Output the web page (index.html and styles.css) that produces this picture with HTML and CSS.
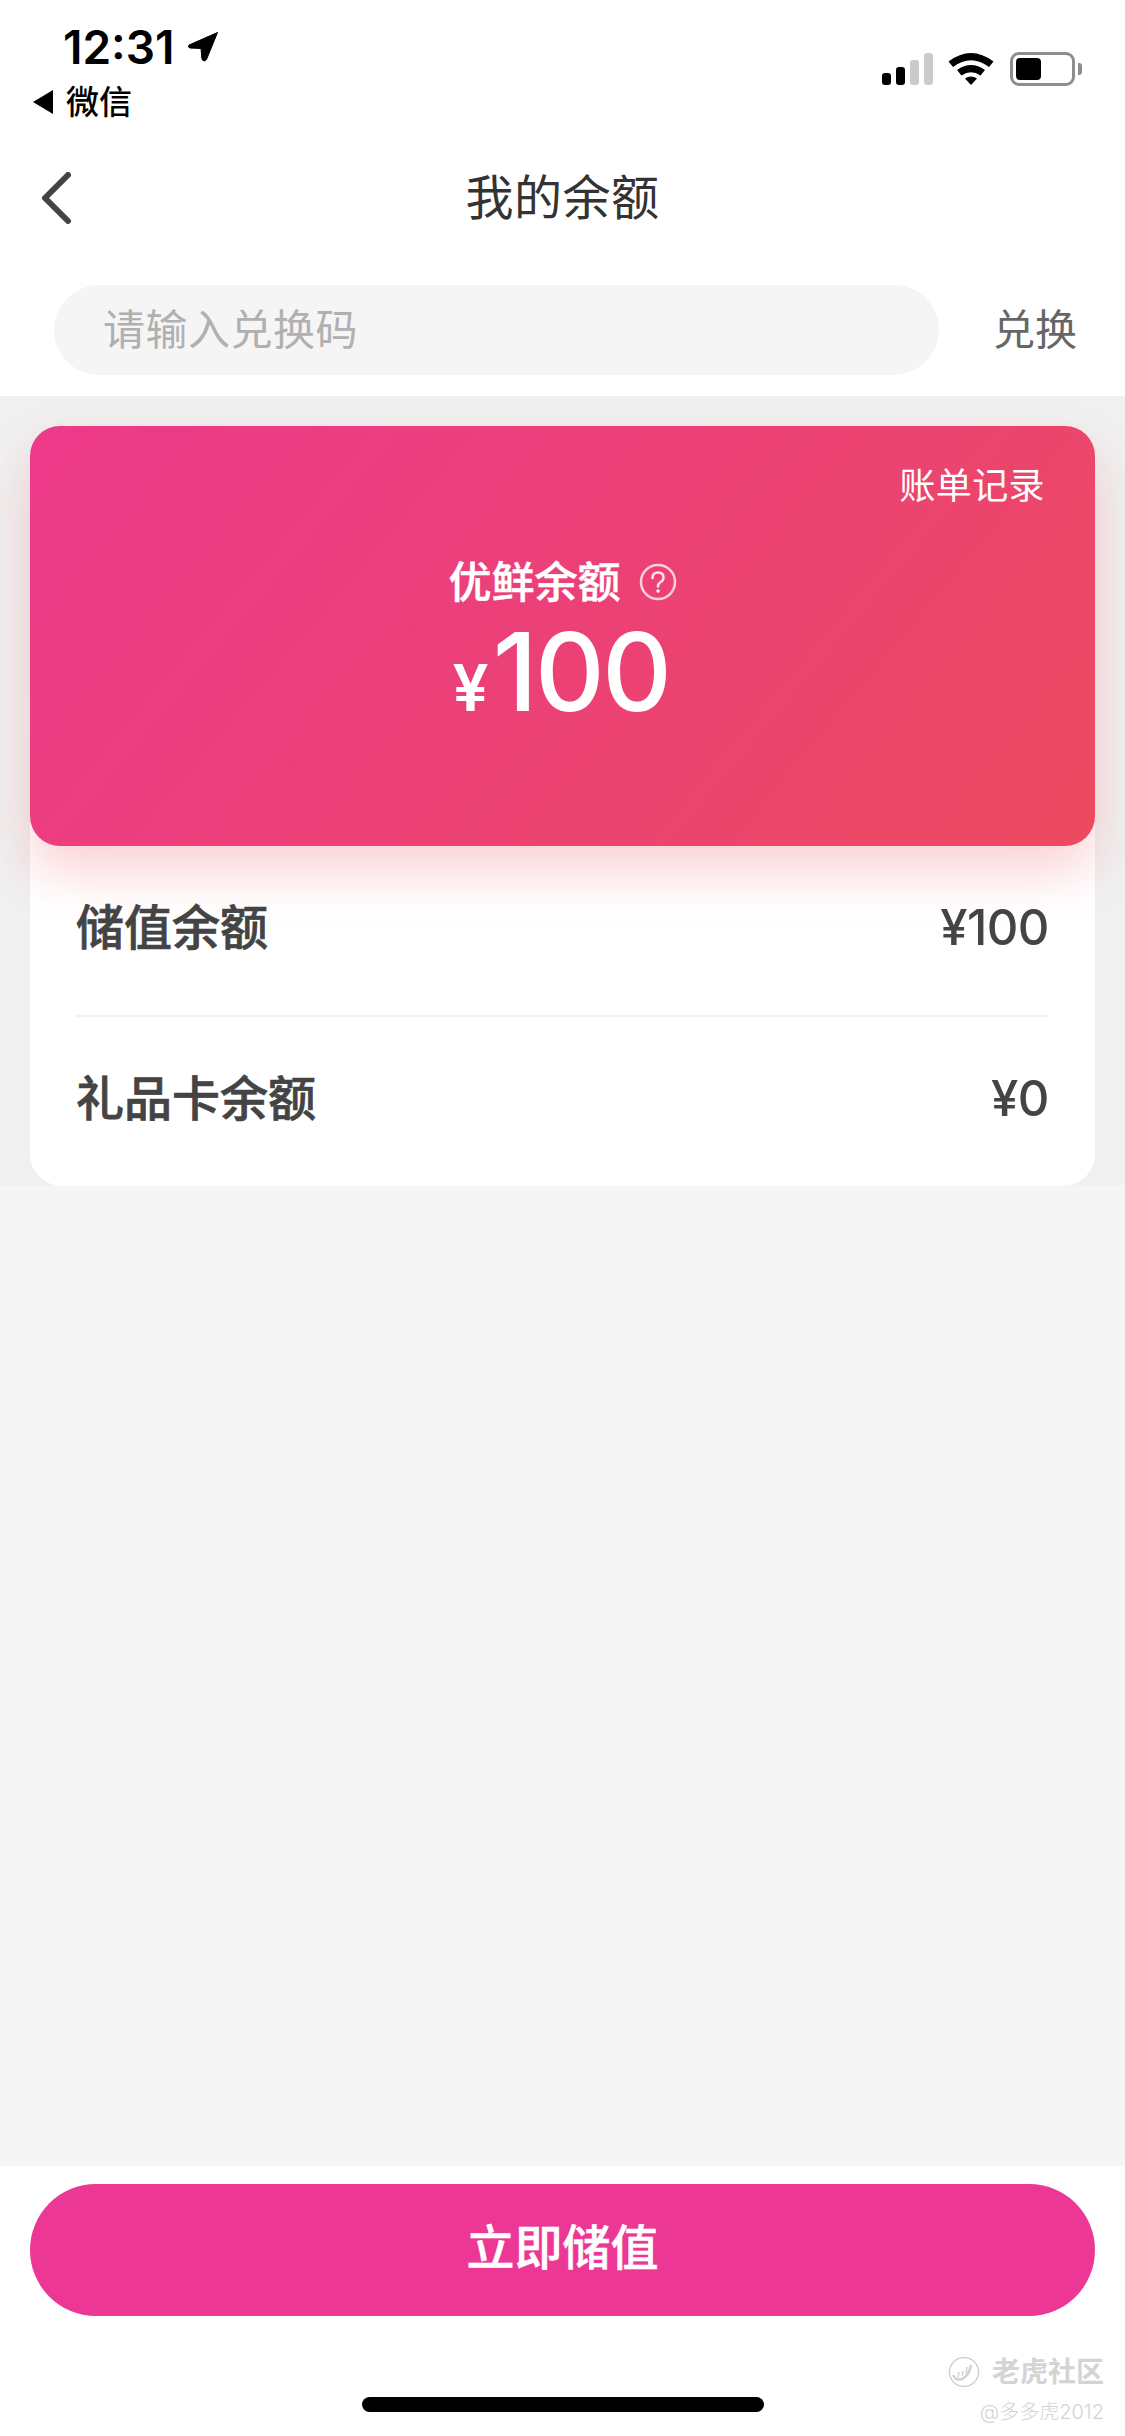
FILE: index.html
```html
<!DOCTYPE html>
<html lang="zh-CN">
<head>
    <meta charset="UTF-8">
    <meta name="viewport" content="width=device-width, initial-scale=1.0">
    <title>我的余额</title>
    <link rel="stylesheet" href="styles.css">
</head>
<body>
    <div class="page">
        <div class="status-bar">
            <div class="status-left">
                <div class="clock">
                    <span class="clock-time">12:31</span>
                    <svg class="clock-arrow" width="30" height="30" viewBox="0 0 30 30">
                        <path d="M29.500 0.500 L1 13 Q-0.500 15.500 2 16 L13 16.500 L14 27.500 Q16 30.500 18.500 27.500 Z" fill="#000" stroke="#000" stroke-width="1" stroke-linejoin="round"/>
                    </svg>
                </div>
                <div class="back-app">
                    <svg width="20" height="24" viewBox="0 0 20 24"><path d="M20 0 V24 L0 12 Z" fill="#000"/></svg>
                    <span>微信</span>
                </div>
            </div>
            <div class="status-right">
                <div class="signal">
                    <i class="bar bar-1"></i>
                    <i class="bar bar-2"></i>
                    <i class="bar bar-3 bar-off"></i>
                    <i class="bar bar-4 bar-off"></i>
                </div>
                <svg class="wifi" width="46" height="33" viewBox="0 0 46 33">
                    <path d="M0.5 9.5 Q23 -7.500 45.500 9.500 L41 15 Q23 1.500 5 15 Z" fill="#000"/>
                    <path d="M9 18 Q23 8 37 18 L32.500 23.500 Q23 17 13.500 23.500 Z" fill="#000"/>
                    <path d="M17 26.500 Q23 22.500 29 26.500 L23 33 Z" fill="#000"/>
                </svg>
                <div class="battery">
                    <div class="battery-body"><div class="battery-fill"></div></div>
                    <div class="battery-tip"></div>
                </div>
            </div>
        </div>

        <div class="nav-bar">
            <svg class="nav-back" width="32" height="52" viewBox="0 0 32 52">
                <path d="M28 3 L5 26 L28 49" fill="none" stroke="#444" stroke-width="6" stroke-linecap="round" stroke-linejoin="round"/>
            </svg>
            <h1 class="nav-title">我的余额</h1>
        </div>

        <div class="redeem-row">
            <div class="redeem-input">请输入兑换码</div>
            <div class="redeem-btn">兑换</div>
        </div>

        <div class="content">
            <div class="balance-section">
                <div class="balance-card">
                    <div class="bill-link">账单记录</div>
                    <div class="balance-label">
                        <span>优鲜余额</span>
                        <svg class="help-icon" width="38" height="38" viewBox="0 0 38 38">
                            <circle cx="19" cy="19" r="17" fill="none" stroke="#fff" stroke-opacity="0.75" stroke-width="2.500"/>
                            <path d="M13.500 15 Q13.500 9.500 19 9.500 Q24.500 9.500 24.500 14.500 Q24.500 17.500 21 19.500 Q19 20.700 19 23.500" fill="none" stroke="#fff" stroke-opacity="0.85" stroke-width="2.500" stroke-linecap="round"/>
                            <circle cx="19" cy="28" r="1.700" fill="#fff"/>
                        </svg>
                    </div>
                    <div class="balance-amount"><span class="yen">¥</span><span class="amount">100</span></div>
                </div>
                <div class="detail-panel">
                    <div class="detail-row detail-row-first">
                        <span class="detail-name">储值余额</span>
                        <span class="detail-value">¥100</span>
                    </div>
                    <div class="detail-row">
                        <span class="detail-name">礼品卡余额</span>
                        <span class="detail-value">¥0</span>
                    </div>
                </div>
            </div>
        </div>

        <div class="footer">
            <div class="charge-btn">立即储值</div>
            <div class="home-bar"></div>
            <div class="watermark">
                <div class="watermark-logo">
                    <svg width="32" height="32" viewBox="0 0 32 32">
                        <circle cx="16" cy="16" r="14.500" fill="none" stroke="#d2d2d2" stroke-width="1.500"/>
                        <path d="M5 19 Q8 25 14 23 Q21 20 23 9" fill="none" stroke="#d2d2d2" stroke-width="2.500"/>
                        <path d="M11 16 L10 21 M15 15 L14 20 M19 11 L18 17" stroke="#d2d2d2" stroke-width="1.500"/>
                    </svg>
                    <span>老虎社区</span>
                </div>
                <div class="watermark-user">@多多虎2012</div>
            </div>
        </div>
    </div>
</body>
</html>
```

FILE: styles.css
```css
* {
    box-sizing: border-box;
}
html, body {
    margin: 0;
    padding: 0;
}
body {
    font-family: Inter, "Noto Sans CJK SC", sans-serif;
    background-color: #fff;
}
.page {
    width: 1125px;
    height: 2436px;
    display: flex;
    flex-direction: column;
    overflow: hidden;
    position: relative;
}

/* status bar */
.status-bar {
    height: 130px;
    display: flex;
    justify-content: space-between;
    flex-shrink: 0;
}
.status-left {
    padding: 22px 0 0 33px;
}
.clock {
    display: flex;
    align-items: center;
    height: 50px;
    padding-left: 30px;
}
.clock-time {
    font-size: 46px;
    font-weight: 600;
    line-height: 50px;
    color: #000;
}
.clock-arrow {
    margin-left: 13px;
}
.back-app {
    display: flex;
    align-items: center;
    height: 40px;
    margin-top: 10px;
}
.back-app span {
    font-size: 33px;
    font-weight: 500;
    line-height: 40px;
    margin-left: 13px;
    color: #000;
}
.status-right {
    display: flex;
    align-items: flex-start;
    padding: 52px 43px 0 0;
}
.signal {
    display: flex;
    align-items: flex-end;
    gap: 5px;
    height: 33px;
    margin-right: 15px;
}
.bar {
    display: block;
    width: 9px;
    border-radius: 3px;
    background-color: #000;
}
.bar-1 { height: 12px; }
.bar-2 { height: 18px; }
.bar-3 { height: 25px; }
.bar-4 { height: 32px; }
.bar-off {
    background-color: #cbcbcb;
}
.battery {
    display: flex;
    align-items: center;
    margin-left: 16px;
}
.battery-body {
    width: 65px;
    height: 34px;
    border: 3px solid #8e8e8e;
    border-radius: 9px;
    padding: 3px;
}
.battery-fill {
    width: 25px;
    height: 100%;
    background-color: #000;
    border-radius: 4px;
}
.battery-tip {
    width: 4px;
    height: 12px;
    margin-left: 3px;
    background-color: #8e8e8e;
    border-radius: 0 3px 3px 0;
}

/* nav */
.nav-bar {
    height: 136px;
    display: flex;
    align-items: center;
    justify-content: center;
    flex-shrink: 0;
    position: relative;
}
.nav-back {
    position: absolute;
    left: 40px;
    top: 42px;
}
.nav-title {
    margin: 0;
    font-size: 48px;
    font-weight: 400;
    line-height: 64px;
    color: #333;
    letter-spacing: 0.5px;
}

/* redeem */
.redeem-row {
    height: 130px;
    padding: 19px 0 21px 54px;
    display: flex;
    align-items: center;
    flex-shrink: 0;
}
.redeem-input {
    width: 885px;
    height: 90px;
    border-radius: 45px;
    background-color: #f5f5f5;
    padding-left: 49px;
    font-size: 42px;
    line-height: 90px;
    letter-spacing: 0.5px;
    color: #b0b0b0;
}
.redeem-btn {
    margin-left: 54px;
    font-size: 42px;
    line-height: 62px;
    color: #666;
}

/* balance */
.content {
    flex: 1;
    background-color: #f5f5f5;
}
.balance-section {
    background-color: #f0f0f0;
    padding: 30px 30px 0;
    height: 789px;
}
.balance-card {
    height: 420px;
    border-radius: 30px;
    background: linear-gradient(130deg, #ed3a8a 0%, #eb4176 50%, #ed4a60 100%);
    box-shadow: 0 26px 50px rgba(238, 80, 90, 0.25);
    color: #fff;
    position: relative;
    z-index: 1;
    text-align: center;
    padding-top: 128px;
}
.bill-link {
    position: absolute;
    top: 36px;
    right: 50px;
    font-size: 36px;
    line-height: 48px;
    letter-spacing: 0.4px;
}
.balance-label {
    display: flex;
    align-items: center;
    justify-content: center;
    height: 56px;
    font-size: 43px;
    font-weight: 500;
    line-height: 56px;
    -webkit-text-stroke: 0.5px #fff;
}
.help-icon {
    margin-left: 18px;
}
.balance-amount {
    display: flex;
    align-items: baseline;
    justify-content: center;
    height: 124px;
    line-height: 124px;
    padding-right: 3px;
}
.yen {
    font-size: 64px;
    font-weight: 600;
    margin-right: 4px;
}
.amount {
    font-size: 108px;
    font-weight: 500;
    letter-spacing: -2.5px;
}
.detail-panel {
    height: 364px;
    margin-top: -24px;
    padding: 24px 46px 0;
    background-color: #fff;
    border-radius: 0 0 32px 32px;
}
.detail-row {
    height: 169px;
    padding-bottom: 6px;
    display: flex;
    align-items: center;
    justify-content: space-between;
    color: #444;
}
.detail-row-first {
    height: 171px;
    border-bottom: 2px solid #f2f2f2;
}
.detail-name {
    font-size: 48px;
    font-weight: 500;
    line-height: 64px;
    -webkit-text-stroke: 0.7px #444;
}
.detail-value {
    font-size: 49px;
    font-weight: 500;
    line-height: 64px;
    letter-spacing: -0.5px;
}

/* bottom */
.footer {
    height: 270px;
    flex-shrink: 0;
    padding: 18px 30px 0;
    background-color: #fff;
    position: relative;
}
.charge-btn {
    height: 132px;
    border-radius: 66px;
    background-color: #ec3894;
    color: #fff;
    text-align: center;
    font-size: 48px;
    font-weight: 500;
    line-height: 128px;
    -webkit-text-stroke: 0.5px #fff;
}
.home-bar {
    width: 402px;
    height: 15px;
    margin: 81px auto 0;
    border-radius: 8px;
    background-color: #000;
}
.watermark {
    position: absolute;
    right: 21px;
    top: 188px;
    color: #d4d4d4;
    text-align: right;
}
.watermark-logo {
    display: flex;
    align-items: center;
    justify-content: flex-end;
    height: 36px;
    font-size: 28px;
    font-weight: 700;
    line-height: 36px;
}
.watermark-logo span {
    margin-left: 12px;
}
.watermark-user {
    margin-top: 9px;
    font-size: 20px;
    font-weight: 300;
    line-height: 26px;
}
```
